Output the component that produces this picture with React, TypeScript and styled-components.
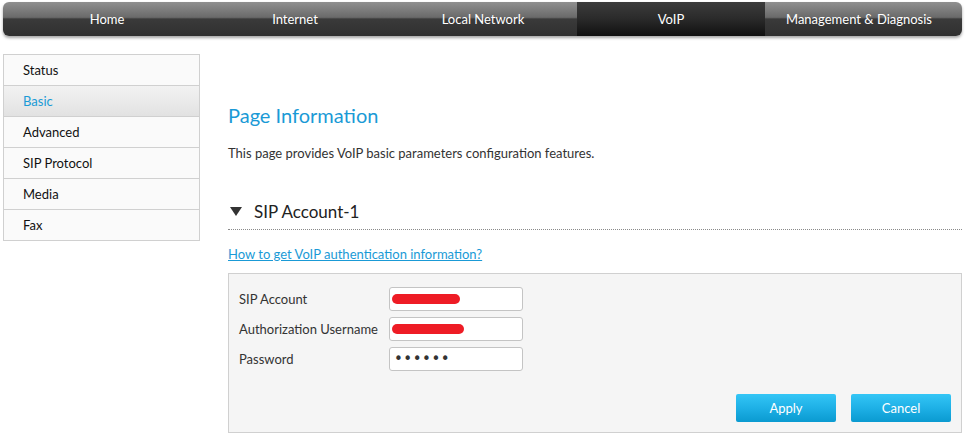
import React from "react";
import styled, { createGlobalStyle } from "styled-components";

const GlobalStyle = createGlobalStyle`
  html, body {
    margin: 0;
    padding: 0;
    background: #fff;
  }
  body {
    font-family: Lato, "Open Sans", "Liberation Sans", sans-serif;
    font-size: 13px;
    color: #333;
  }
`;

const blue = "#1a9ad6";

const Page = styled.div`
  width: 965px;
  height: 434px;
  overflow: hidden;
  padding: 2px 3px 0 3px;
  box-sizing: border-box;
`;

const TopNav = styled.nav`
  height: 34px;
  border-radius: 6px;
  padding: 0 9px 0 10px;
  display: flex;
  background: linear-gradient(to bottom, #909090 0%, #6a6a6a 45%, #3a3a3a 50%, #303030 100%);
  box-shadow: 0 2px 3px rgba(0, 0, 0, 0.35);
`;

const NavItem = styled.a<{ $active?: boolean }>`
  width: 188px;
  display: flex;
  align-items: center;
  justify-content: center;
  color: #fff;
  font-size: 13px;
  text-decoration: none;
  background: ${(p) =>
    p.$active ? "linear-gradient(to bottom, #3c3c3c 0%, #2a2a2a 50%, #101010 100%)" : "transparent"};
`;

const Body = styled.div`
  display: flex;
  gap: 28px;
  margin-top: 18px;
`;

const SideMenu = styled.ul`
  list-style: none;
  margin: 0;
  padding: 0;
  width: 197px;
  border: 1px solid #d0d0d0;
  box-sizing: border-box;
  align-self: flex-start;
`;

const SideItem = styled.li<{ $active?: boolean; $first?: boolean }>`
  height: 30px;
  line-height: 30px;
  padding-left: 19px;
  border-top: ${(p) => (p.$first ? "none" : "1px solid #d0d0d0")};
  color: ${(p) => (p.$active ? blue : "#111")};
  background: ${(p) =>
    p.$active ? "linear-gradient(to bottom, #f2f2f2, #e2e2e2)" : "#fafafa"};
`;

const Main = styled.main`
  flex: 1;
  padding-top: 48px;
`;

const Title = styled.h1`
  margin: 0;
  font-size: 20px;
  font-weight: normal;
  color: ${blue};
  line-height: 26px;
`;

const Desc = styled.p`
  margin: 16px 0 0;
  line-height: 18px;
`;

const SectionHead = styled.div`
  margin-top: 34px;
  display: flex;
  align-items: center;
  gap: 12px;
  padding-left: 2px;
  height: 30px;
  font-size: 17px;
  color: #222;
  border-bottom: 1px dotted #8a8a8a;
  padding-bottom: 3px;
`;

const Arrow = styled.span`
  width: 0;
  height: 0;
  border-left: 6px solid transparent;
  border-right: 6px solid transparent;
  border-top: 9px solid #333;
`;

const HelpLink = styled.a`
  display: inline-block;
  margin-top: 15px;
  color: ${blue};
  text-decoration: underline;
  line-height: 18px;
`;

const FormBox = styled.div`
  margin-top: 10px;
  height: 160px;
  box-sizing: border-box;
  border: 1px solid #d0d0d0;
  background: #f5f5f5;
  padding: 10px 10px 0;
  display: flex;
  flex-direction: column;
`;

const Row = styled.div`
  display: flex;
  align-items: center;
  height: 30px;
`;

const Label = styled.label`
  width: 150px;
  color: #333;
`;

const Field = styled.div`
  position: relative;
  width: 134px;
  height: 24px;
`;

const Input = styled.input`
  width: 100%;
  height: 100%;
  box-sizing: border-box;
  border: 1px solid #c4c4c4;
  border-radius: 3px;
  background: #fff;
  padding: 0 4px;
  font-size: 13px;
  color: #333;
  &[type="password"] {
    font-family: "DejaVu Sans", sans-serif;
    font-size: 15px;
    letter-spacing: 0.5px;
  }
`;

const Redaction = styled.span<{ $w: number }>`
  position: absolute;
  left: 3px;
  top: 7px;
  height: 10px;
  width: ${(p) => p.$w}px;
  background: #ee1c25;
  border-radius: 5px;
`;

const Actions = styled.div`
  margin-top: auto;
  margin-bottom: 10px;
  display: flex;
  justify-content: flex-end;
  gap: 15px;
`;

const Btn = styled.button`
  width: 100px;
  height: 28px;
  border: none;
  border-radius: 2px;
  background: linear-gradient(to bottom, #34c6f6 0%, #1eb0e6 50%, #0a9ad0 100%);
  color: #fff;
  font-family: inherit;
  font-size: 13px;
  cursor: pointer;
`;

const navItems = ["Home", "Internet", "Local Network", "VoIP", "Management & Diagnosis"];
const sideItems = ["Status", "Basic", "Advanced", "SIP Protocol", "Media", "Fax"];

export default function App() {
  return (
    <Page>
      <GlobalStyle />
      <TopNav>
        {navItems.map((n) => (
          <NavItem key={n} $active={n === "VoIP"}>
            {n}
          </NavItem>
        ))}
      </TopNav>
      <Body>
        <SideMenu>
          {sideItems.map((s, i) => (
            <SideItem key={s} $first={i === 0} $active={s === "Basic"}>
              {s}
            </SideItem>
          ))}
        </SideMenu>
        <Main>
          <Title>Page Information</Title>
          <Desc>This page provides VoIP basic parameters configuration features.</Desc>
          <SectionHead>
            <Arrow />
            SIP Account-1
          </SectionHead>
          <HelpLink href="#">How to get VoIP authentication information?</HelpLink>
          <FormBox>
            <Row>
              <Label>SIP Account</Label>
              <Field>
                <Input type="text" defaultValue="" />
                <Redaction $w={68} />
              </Field>
            </Row>
            <Row>
              <Label>Authorization Username</Label>
              <Field>
                <Input type="text" defaultValue="" />
                <Redaction $w={72} />
              </Field>
            </Row>
            <Row>
              <Label>Password</Label>
              <Field>
                <Input type="password" defaultValue="secret" />
              </Field>
            </Row>
            <Actions>
              <Btn>Apply</Btn>
              <Btn>Cancel</Btn>
            </Actions>
          </FormBox>
        </Main>
      </Body>
    </Page>
  );
}
